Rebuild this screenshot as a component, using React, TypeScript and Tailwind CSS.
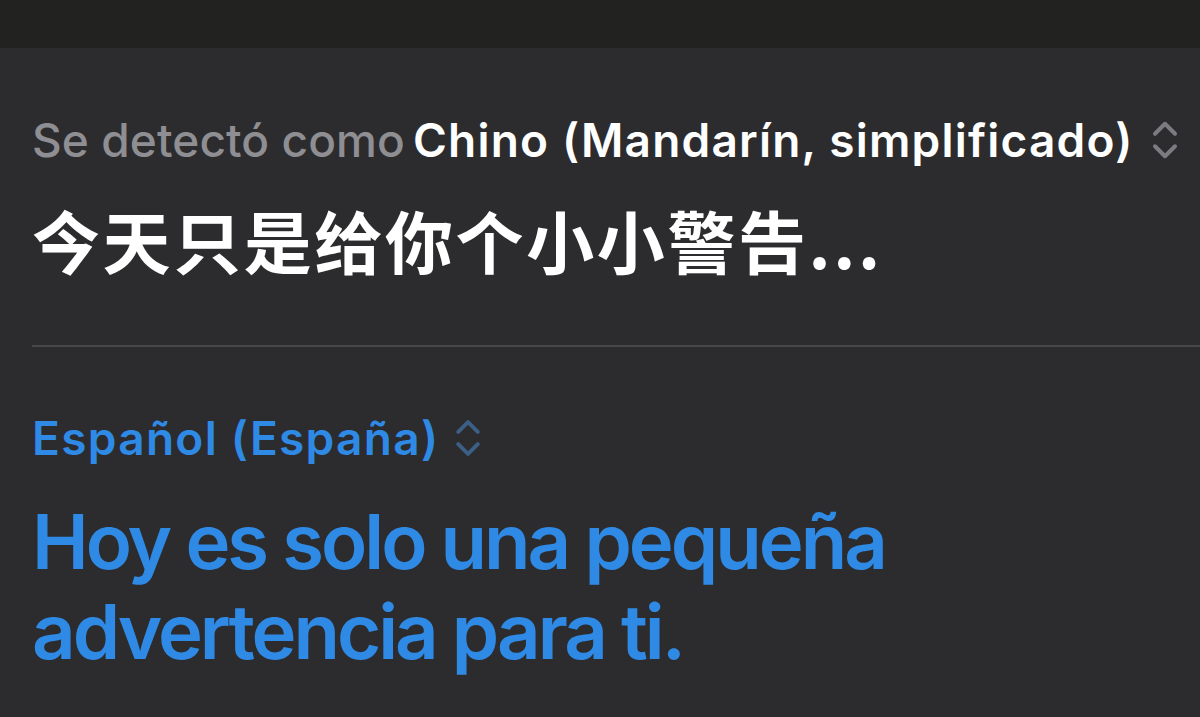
import React from "react";

function UpDown({ className }: { className?: string }) {
  return (
    <svg viewBox="0 0 24 36" className={className} fill="none" stroke="currentColor" strokeWidth="3.2" strokeLinecap="round" strokeLinejoin="round">
      <path d="M4 13 L12 5 L20 13" />
      <path d="M4 23 L12 31 L20 23" />
    </svg>
  );
}

export default function App() {
  return (
    <div className="w-[1200px] h-[717px] overflow-hidden bg-[#2c2c2e] flex flex-col" style={{ fontFamily: "Inter, 'Noto Sans CJK SC', sans-serif" }}>
      {/* top bar */}
      <div className="h-12 shrink-0 bg-[#222221]" />

      {/* source */}
      <div className="pl-8 pt-[68px]">
        <div className="flex items-center h-12 text-[46px]">
          <span className="text-[#8e8e93] font-medium tracking-[0.1px]">Se detectó como</span>
          <span className="text-white font-semibold ml-[8px] tracking-[1.2px]">Chino (Mandarín, simplificado)</span>
          <UpDown className="ml-[16px] w-[30px] h-[46px] text-[#7c7c80]" />
        </div>
        <div className="mt-[36px] text-white text-[68px] font-bold leading-[80px] tracking-[2.6px]" style={{ fontFamily: "'Noto Sans CJK SC', sans-serif" }}>
          今天只是给你个小小警告...
        </div>
      </div>

      {/* divider */}
      <div className="ml-8 mt-[65px] h-[2px] bg-[#48484b]" />

      {/* target */}
      <div className="pl-8 pt-[67px]">
        <div className="flex items-center h-12 text-[46px] font-semibold text-[#2f8ae6]">
          <span className="tracking-[1.3px]">Español (España)</span>
          <UpDown className="ml-[14px] w-[30px] h-[44px] text-[#3c5f86]" />
        </div>
        <div className="mt-[34px] text-[#2f8ae6] text-[76px] font-semibold leading-[90px] tracking-[-3px]">
          Hoy es solo una pequeña
          <br />
          advertencia para ti.
        </div>
      </div>
    </div>
  );
}
